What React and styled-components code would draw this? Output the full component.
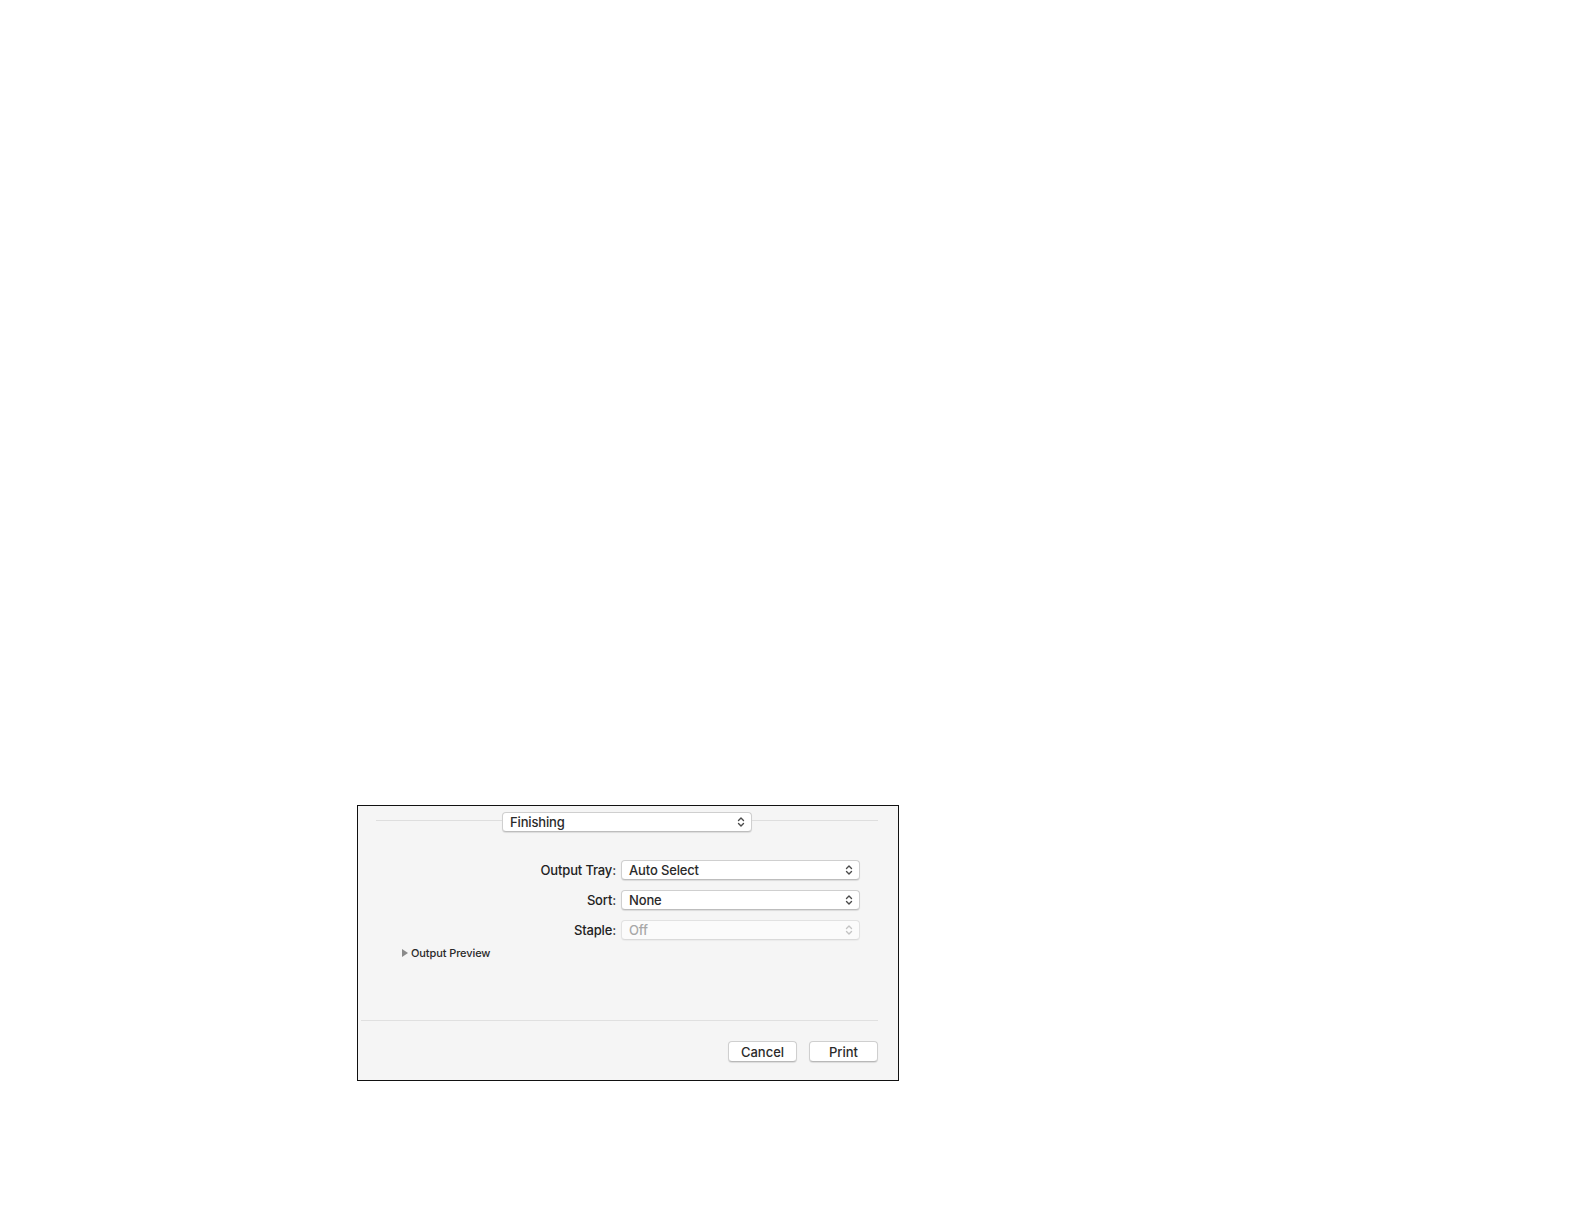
import React from 'react';
import styled, { createGlobalStyle } from 'styled-components';

const GlobalStyle = createGlobalStyle`
  html, body {
    margin: 0;
    padding: 0;
    background: #ffffff;
  }
  body {
    font-family: Inter, "Liberation Sans", Arial, sans-serif;
    color: #1e1e1e;
  }
`;

function Chevrons({ disabled }) {
    const c = disabled ? '#c4c4c4' : '#4a4a4a';
    return (
        <svg width="8" height="12" viewBox="0 0 8 12" fill="none">
            <path d="M1.5 4.5 L4 2 L6.5 4.5" stroke={c} strokeWidth="1.4" strokeLinecap="round" strokeLinejoin="round" />
            <path d="M1.5 7.5 L4 10 L6.5 7.5" stroke={c} strokeWidth="1.4" strokeLinecap="round" strokeLinejoin="round" />
        </svg>
    );
}

function Popup({ value, disabled, wide }) {
    return (
        <PopupBox $disabled={disabled} $wide={wide}>
            <span>{value}</span>
            <Chevrons disabled={disabled} />
        </PopupBox>
    );
}

const rows = [
    { label: 'Output Tray:', value: 'Auto Select' },
    { label: 'Sort:', value: 'None' },
    { label: 'Staple:', value: 'Off', disabled: true },
];

export default function App() {
    return (
        <>
            <GlobalStyle />
            <Page>
                <Dialog>
                    <Header>
                        <Rule />
                        <Popup value="Finishing" wide />
                        <Rule />
                    </Header>

                    <Form>
                        {rows.map((r) => (
                            <React.Fragment key={r.label}>
                                <Label>{r.label}</Label>
                                <Popup value={r.value} disabled={r.disabled} />
                            </React.Fragment>
                        ))}
                    </Form>

                    <Disclosure>
                        <Triangle />
                        Output Preview
                    </Disclosure>

                    <Spacer />
                    <BottomRule />

                    <Buttons>
                        <Button>Cancel</Button>
                        <Button>Print</Button>
                    </Buttons>
                </Dialog>
            </Page>
        </>
    );
}

const Page = styled.div`
  width: 1584px;
  height: 1224px;
  padding: 805px 0 0 357px;
  box-sizing: border-box;
`;

const Dialog = styled.div`
  box-sizing: border-box;
  width: 542px;
  height: 276px;
  border: 1px solid #111;
  background: #f5f5f5;
  display: flex;
  flex-direction: column;
`;

const Header = styled.div`
  display: flex;
  align-items: center;
  padding: 6px 20px 0 18px;
`;

const Rule = styled.div`
  flex: 1;
  height: 1px;
  background: #dedede;
  transform: translateY(-2px);
`;

const PopupBox = styled.div`
  box-sizing: border-box;
  width: ${(p) => (p.$wide ? '250px' : '239px')};
  height: 20px;
  background: ${(p) => (p.$disabled ? '#fbfbfb' : '#ffffff')};
  border: 1px solid ${(p) => (p.$disabled ? '#e2e2e2' : '#cfcfcf')};
  border-bottom-color: ${(p) => (p.$disabled ? '#dadada' : '#bdbdbd')};
  border-radius: 4px;
  box-shadow: 0 1px 1px rgba(0, 0, 0, ${(p) => (p.$disabled ? 0.04 : 0.1)});
  display: flex;
  align-items: center;
  justify-content: space-between;
  padding: 0 6px 0 7px;
  font-size: 13px;
  font-weight: 500;
  color: ${(p) => (p.$disabled ? '#a8a8a8' : '#2a2a2a')};
  letter-spacing: -0.15px;

  svg {
    flex: none;
  }
`;

const Form = styled.div`
  display: grid;
  grid-template-columns: 258px 239px;
  column-gap: 5px;
  row-gap: 10px;
  align-items: center;
  margin-top: 28px;
`;

const Label = styled.div`
  text-align: right;
  font-size: 13px;
  font-weight: 500;
  color: #222;
  letter-spacing: -0.15px;
`;

const Disclosure = styled.div`
  display: flex;
  align-items: center;
  gap: 3px;
  margin-top: 6px;
  padding-left: 44px;
  font-size: 11px;
  font-weight: 500;
  color: #2a2a2a;
  letter-spacing: -0.1px;
`;

const Triangle = styled.span`
  width: 0;
  height: 0;
  border-top: 4px solid transparent;
  border-bottom: 4px solid transparent;
  border-left: 6px solid #8a8a8a;
`;

const Spacer = styled.div`
  flex: 1;
`;

const BottomRule = styled.div`
  height: 1px;
  background: #e0e0e0;
  margin: 0 20px 0 3px;
`;

const Buttons = styled.div`
  display: flex;
  justify-content: flex-end;
  gap: 12px;
  padding: 20px 20px 18px 0;
`;

const Button = styled.div`
  box-sizing: border-box;
  width: 69px;
  height: 21px;
  background: #ffffff;
  border: 1px solid #cfcfcf;
  border-bottom-color: #b8b8b8;
  border-radius: 4px;
  box-shadow: 0 1px 1px rgba(0, 0, 0, 0.1);
  display: flex;
  align-items: center;
  justify-content: center;
  font-size: 13px;
  font-weight: 500;
  color: #2a2a2a;
`;
